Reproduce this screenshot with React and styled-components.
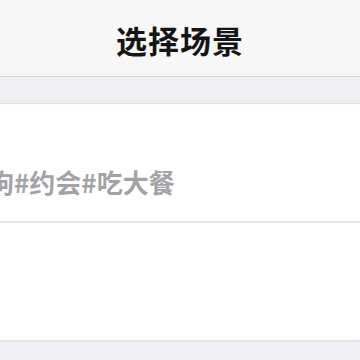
import React from 'react';
import styled, { createGlobalStyle } from 'styled-components';

const Global = createGlobalStyle`
  html, body {
    margin: 0;
    padding: 0;
    background: #efeff4;
    font-family: "Noto Sans CJK SC", "Noto Sans", sans-serif;
  }
`;

const Page = styled.div`
  width: 360px;
  height: 360px;
  overflow: hidden;
  background: #efeff4;
  display: flex;
  flex-direction: column;
`;

const NavBar = styled.div`
  height: 76px;
  background: #f7f7f7;
  border-bottom: 1px solid #d9d9dc;
  display: flex;
  align-items: center;
  justify-content: center;
  flex-shrink: 0;
`;

const Title = styled.h1`
  margin: 0;
  padding-top: 2px;
  font-size: 31px;
  font-weight: 700;
  color: #151515;
  letter-spacing: 1px;
`;

const Spacer = styled.div`
  height: 26px;
  border-bottom: 1px solid #e2e2e6;
  flex-shrink: 0;
`;

const Card = styled.div`
  background: #fff;
  border-bottom: 2px solid #e4e4e7;
  display: flex;
  flex-direction: column;
  flex-shrink: 0;
`;

const InputRow = styled.div`
  height: 119px;
  border-bottom: 2px solid #e6e6e6;
  overflow: hidden;
  display: flex;
  align-items: flex-start;
  padding-top: 62px;
  box-sizing: border-box;
`;

const Placeholder = styled.span`
  margin-left: -12px;
  font-size: 26px;
  line-height: 32px;
  font-weight: 700;
  color: #a3a3a6;
  white-space: nowrap;
`;

const Blank = styled.div`
  height: 117px;
`;

export default function App() {
  return (
    <Page>
      <Global />
      <NavBar>
        <Title>选择场景</Title>
      </NavBar>
      <Spacer />
      <Card>
        <InputRow>
          <Placeholder>狗#约会#吃大餐</Placeholder>
        </InputRow>
        <Blank />
      </Card>
    </Page>
  );
}
